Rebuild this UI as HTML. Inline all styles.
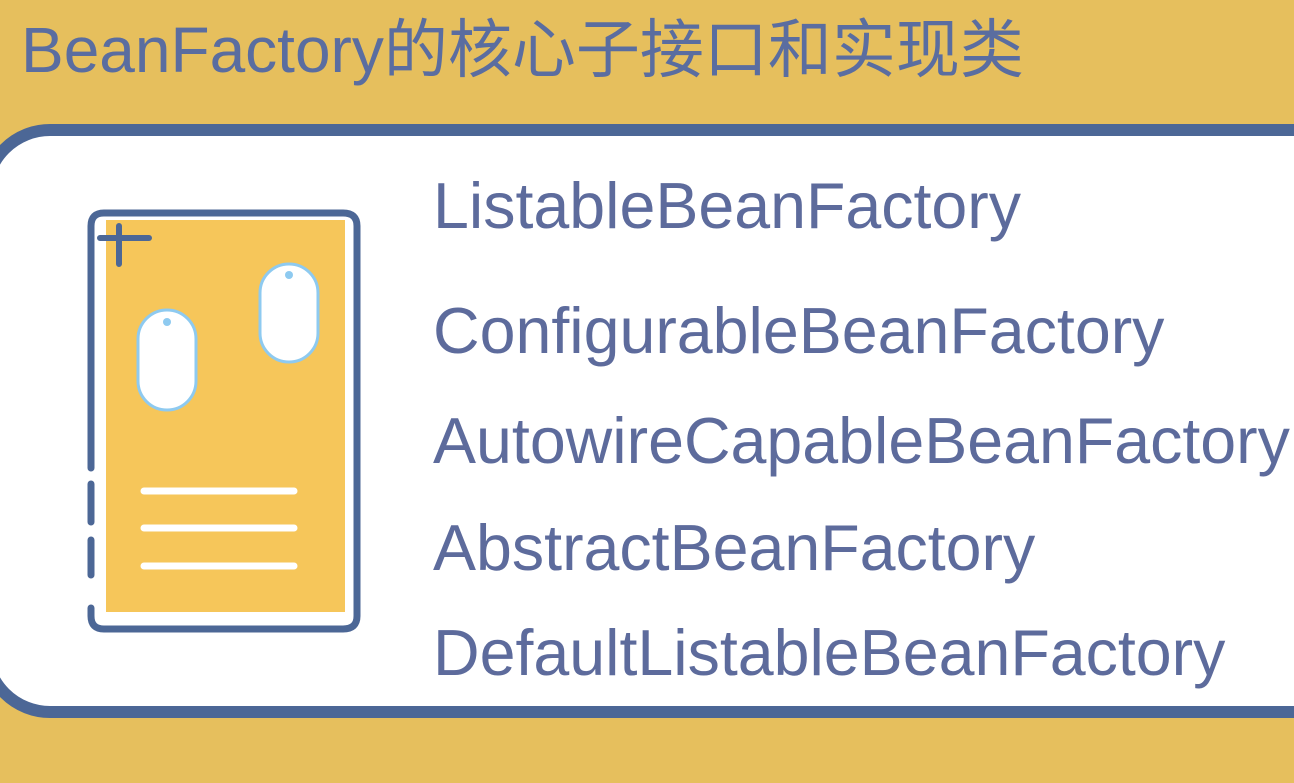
<!DOCTYPE html>
<html><head><meta charset="utf-8"><style>
html,body{margin:0;padding:0;}
body{width:1294px;height:783px;overflow:hidden;background:#e6bf5d;position:relative;font-family:"Liberation Sans","Noto Sans CJK SC",sans-serif;}
.title{position:absolute;left:21px;top:10px;font-size:64px;line-height:80px;color:#5a6da0;white-space:nowrap;}
.panel{position:absolute;left:-20px;top:124px;width:1400px;height:570px;background:#fff;border:12px solid #4c6796;border-radius:70px;}
.item{position:absolute;left:433px;font-size:64.5px;color:#5d6b9c;white-space:nowrap;}
</style></head><body>
<div class="title">BeanFactory的核心子接口和实现类</div>
<div class="panel"></div>
<svg style="position:absolute;left:0;top:0" width="1294" height="783">
<rect x="106" y="220" width="239" height="392" fill="#f6c65a"/>
<path d="M91 468 V226 Q91 213 104 213 H343 Q357 213 357 226 V616 Q357 629 343 629 H104 Q91 629 91 616 V608" fill="none" stroke="#4c6796" stroke-width="7" stroke-linecap="round"/>
<path d="M91 484 V522 M91 540 V575" stroke="#4c6796" stroke-width="7" stroke-linecap="round"/>
<path d="M100 238 H149 M119 226 V264" stroke="#4c6796" stroke-width="6" stroke-linecap="round"/>
<rect x="138" y="310" width="58" height="100" rx="29" fill="#fff" stroke="#8ecaf0" stroke-width="3"/>
<circle cx="167" cy="322" r="4" fill="#8ecaf0"/>
<rect x="260" y="264" width="58" height="98" rx="29" fill="#fff" stroke="#8ecaf0" stroke-width="3"/>
<circle cx="289" cy="275" r="4" fill="#8ecaf0"/>
<path d="M144 491 H294 M144 528 H294 M144 566 H294" stroke="#fff" stroke-width="7" stroke-linecap="round"/>
</svg>
<div class="item" style="top:169px">ListableBeanFactory</div>
<div class="item" style="top:294px">ConfigurableBeanFactory</div>
<div class="item" style="top:404px">AutowireCapableBeanFactory</div>
<div class="item" style="top:511px">AbstractBeanFactory</div>
<div class="item" style="top:616px">DefaultListableBeanFactory</div>
</body></html>
